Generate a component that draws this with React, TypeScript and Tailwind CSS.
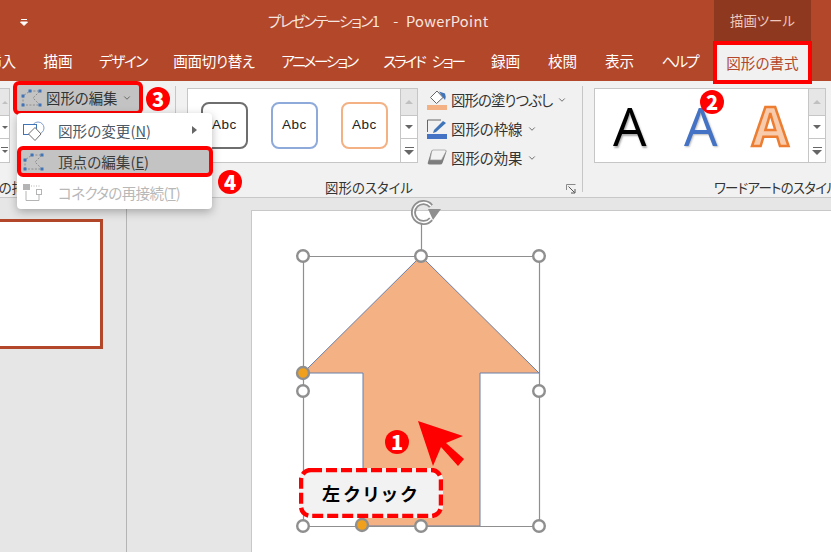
import type { ReactNode } from 'react';
import { ChevronDown } from 'lucide-react';

const tabs = [
  { label: '挿入', cls: 'w-[57px] -ml-[27px]' },
  { label: '描画', cls: 'w-[56px]' },
  { label: 'デザイン', cls: 'w-[74px] tracking-[-1.4px]' },
  { label: '画面切り替え', cls: 'w-[108px] tracking-[-0.4px]' },
  { label: 'アニメーション', cls: 'w-[102px] tracking-[-2.2px]' },
  { label: 'スライド ショー', cls: 'w-[107px] tracking-[-2.2px] [word-spacing:6px]' },
  { label: '録画', cls: 'w-[57px]' },
  { label: '校閲', cls: 'w-[57px]' },
  { label: '表示', cls: 'w-[57px]' },
  { label: 'ヘルプ', cls: 'w-[63px] tracking-[-2px]' },
];

function Badge({ n, cls }: { n: string; cls: string }) {
  return (
    <span className={`absolute flex h-[24px] w-[24px] items-center justify-center rounded-full bg-[#ff0000] text-[20px] font-black leading-none text-white ${cls}`}>
      {n}
    </span>
  );
}

function EditPointsIcon() {
  return (
    <svg width="21" height="18" viewBox="0 0 21 18" className="shrink-0">
      <path d="M2 16 L2 7 L9 2 L19 2 L12 9 L19 16 Z" fill="none" stroke="#8c8c8c" strokeWidth="1" strokeDasharray="2 1.5" />
      <rect x="0.5" y="5.5" width="3" height="3" fill="#3f74b8" />
      <rect x="0.5" y="14.5" width="3" height="3" fill="#3f74b8" />
      <rect x="7.5" y="0.5" width="3" height="3" fill="#3f74b8" />
      <rect x="17.5" y="0.5" width="3" height="3" fill="#3f74b8" />
      <rect x="17.5" y="14.5" width="3" height="3" fill="#3f74b8" />
    </svg>
  );
}

function ChangeShapeIcon() {
  return (
    <svg width="22" height="20" viewBox="0 0 22 20" className="shrink-0">
      <circle cx="15" cy="7" r="6" fill="none" stroke="#7f9fcb" strokeWidth="1" />
      <rect x="0.5" y="3.5" width="13" height="10" fill="#fff" stroke="#3f74b8" strokeWidth="1" />
      <path d="M12 6.5 L18 13 L12 19.5 L5.5 13 Z" fill="#fff" stroke="#6d6d6d" strokeWidth="1" />
    </svg>
  );
}

function ReconnectIcon() {
  return (
    <svg width="20" height="20" viewBox="0 0 20 20" className="shrink-0">
      <rect x="0" y="1" width="7" height="6" fill="#b4b4b4" />
      <path d="M8 3 H18" stroke="#b4b4b4" strokeDasharray="1 1.5" />
      <rect x="13.5" y="6.5" width="5" height="5" fill="#fff" stroke="#b4b4b4" />
      <path d="M3 8 V17.5 H16 V12" fill="none" stroke="#b4b4b4" />
    </svg>
  );
}

function FillIcon() {
  return (
    <svg width="20" height="20" viewBox="0 0 20 20">
      <path d="M10 1 L16 7.5 L9.5 13.5 L3.5 7.5 Z" fill="#fff" stroke="#666" strokeWidth="1" />
      <path d="M12 1.5 L18 3.5 Q19.5 7 18 10 L16 7.5 Z" fill="#3f74b8" />
      <rect x="0" y="15" width="20" height="5" fill="#f4b183" />
    </svg>
  );
}

function LineIcon() {
  return (
    <svg width="20" height="20" viewBox="0 0 20 20">
      <path d="M14 1 H0.5 V13" fill="none" stroke="#666" strokeWidth="1" />
      <path d="M7 11 L16 2 L19 4 L9 13 L6 14 Z" fill="#3f74b8" />
      <rect x="0" y="15" width="20" height="5" fill="#4472c4" />
    </svg>
  );
}

function EffectIcon() {
  return (
    <svg width="20" height="17" viewBox="0 0 20 17">
      <path d="M6 1 H18 Q20 1 19 4 L15.5 14 Q15 15.5 13 15.5 H2.5 Q0 15.5 1 13 L4 3 Q4.5 1 6 1 Z" fill="#7d7d7d" />
      <path d="M6 1 H18 Q20 1 18.5 3.5 L14.5 11 H3 L4.5 3 Q5 1 6 1 Z" fill="#f2f2f2" stroke="#9a9a9a" strokeWidth="0.7" />
    </svg>
  );
}

function Launcher() {
  return (
    <svg width="10" height="10" viewBox="0 0 10 10" className="absolute bottom-[3px] right-[6px]">
      <path d="M0.5 6 V0.5 H9.5" fill="none" stroke="#8a8a8a" />
      <path d="M2.5 2.5 L8.5 8.5 M5 9 H9 V5" fill="none" stroke="#555" />
    </svg>
  );
}

function GalleryScroll() {
  return (
    <div className="flex h-full w-[17px] shrink-0 flex-col border-l border-[#c6c6c6] text-[#666]">
      <div className="flex h-[26px] items-center justify-center bg-[#e6e6e6]">
        <span className="h-0 w-0 border-x-[4px] border-b-[4px] border-x-transparent border-b-[#c0c0c0]" />
      </div>
      <div className="flex h-[24px] items-center justify-center border-y border-[#c6c6c6] bg-white">
        <span className="h-0 w-0 border-x-[4px] border-t-[4px] border-x-transparent border-t-[#666]" />
      </div>
      <div className="flex flex-1 flex-col items-center justify-center gap-[2px] bg-white">
        <span className="h-px w-[9px] bg-[#666]" />
        <span className="h-0 w-0 border-x-[5px] border-t-[5px] border-x-transparent border-t-[#666]" />
      </div>
    </div>
  );
}

function AbcBox({ cls }: { cls: string }) {
  return (
    <div className={`flex h-[47px] w-[47px] shrink-0 items-center justify-center rounded-lg border-2 bg-white font-['Liberation_Sans',sans-serif] text-[13.5px] tracking-[0.5px] text-[#222] ${cls}`}>
      Abc
    </div>
  );
}

function Command({ icon, cls, children }: { icon: ReactNode; cls?: string; children: ReactNode }) {
  return (
    <div className="flex h-[29px] items-center gap-[4px]">
      <span className="flex w-[20px] justify-center">{icon}</span>
      <span className={`whitespace-nowrap text-[14.4px] text-[#333] ${cls ?? ''}`}>{children}</span>
      <ChevronDown size={10} className="ml-[1px] text-[#555]" />
    </div>
  );
}

function MenuRow({ icon, cls, children }: { icon: ReactNode; cls?: string; children: ReactNode }) {
  return (
    <div className={`flex items-center pl-[6px] text-[14.6px] ${cls ?? ''}`}>
      <span className="flex w-[22px] shrink-0">{icon}</span>
      <span className="ml-[13px] whitespace-nowrap">{children}</span>
    </div>
  );
}

function Handle({ x, y, orange }: { x: number; y: number; orange?: boolean }) {
  return <circle cx={x} cy={y} r={orange ? 6 : 5.8} fill={orange ? '#f0a01c' : '#fff'} stroke="#8f8f8f" strokeWidth={2.4} />;
}

export default function App() {
  return (
    <div className="relative flex h-[552px] w-[831px] flex-col overflow-hidden bg-[#e6e6e6] font-['Noto_Sans_CJK_JP',sans-serif] [font-feature-settings:'palt']">
      {/* Title bar */}
      <div className="flex h-[41px] shrink-0 items-center bg-[#b3472a] text-[14.6px] text-[#f6e6e0]">
        <svg width="8" height="7" viewBox="0 0 8 7" className="ml-[20px] mt-[3px]">
          <path d="M1 0.5 H7 M0.5 3 H7.5 L4 6.5 Z" stroke="#fff" fill="#fff" strokeWidth="1" />
        </svg>
        <span className="ml-[240px] w-[118px] whitespace-nowrap tracking-[-1.6px]">プレゼンテーション1</span>
        <span className="whitespace-pre tracking-[0.35px]">{'  -  PowerPoint'}</span>
        <div className="ml-auto mr-[20px] flex h-full w-[97px] items-center justify-center bg-[#8e3820] text-[13.4px] text-[#efc9bb]">描画ツール</div>
      </div>

      {/* Tabs */}
      <div className="flex h-[40px] shrink-0 items-center bg-[#b3472a] text-[14.6px] text-white">
        {tabs.map((t) => (
          <div key={t.label} className={`shrink-0 whitespace-pre text-center ${t.cls}`}>{t.label}</div>
        ))}
      </div>

      {/* Ribbon */}
      <div className="flex h-[117px] shrink-0 border-b border-[#c8c8c8] bg-[#f1f1f1] text-[#333]">
        <div className="relative w-[175px] shrink-0 overflow-hidden">
          <div className="mt-[7px] h-[75px] w-[10px] border-y border-r border-[#c6c6c6] bg-white">
            <div className="flex h-[26px] items-center justify-center bg-[#e6e6e6]">
              <span className="h-0 w-0 border-x-[3px] border-b-[3px] border-x-transparent border-b-[#c0c0c0]" />
            </div>
            <div className="flex h-[24px] items-center justify-center border-y border-[#c6c6c6]">
              <span className="h-0 w-0 border-x-[3px] border-t-[3px] border-x-transparent border-t-[#666]" />
            </div>
            <div className="flex h-[22px] flex-col items-center justify-center gap-[2px]">
              <span className="h-px w-[7px] bg-[#666]" />
              <span className="h-0 w-0 border-x-[3px] border-t-[3px] border-x-transparent border-t-[#666]" />
            </div>
          </div>
          <div className="-ml-[28px] mt-[14px] whitespace-nowrap text-[13.4px]">図形の挿入</div>
        </div>
        <div className="my-[5px] w-px shrink-0 bg-[#c6c6c6]" />

        <div className="relative w-[406px] shrink-0">
          <div className="ml-[11px] mt-[7px] flex h-[75px]">
            <div className="flex h-[75px] w-[231px] items-center border border-[#c6c6c6] bg-white">
              <div className="flex flex-1 items-center gap-[23px] pl-[13px]">
                <AbcBox cls="border-[#6e6e6e]" />
                <AbcBox cls="border-[#8eaadb]" />
                <AbcBox cls="border-[#f4b183]" />
              </div>
              <GalleryScroll />
            </div>
            <div className="-mt-[3px] ml-[9px]">
              <Command icon={<FillIcon />} cls="tracking-[-0.9px]">図形の塗りつぶし</Command>
              <Command icon={<LineIcon />}>図形の枠線</Command>
              <Command icon={<EffectIcon />}>図形の効果</Command>
            </div>
          </div>
          <div className="mt-[14px] pr-[20px] text-center text-[13.4px]">図形のスタイル</div>
          <Launcher />
        </div>
        <div className="my-[5px] w-px shrink-0 bg-[#c6c6c6]" />

        <div className="relative flex-1 overflow-hidden">
          <div className="ml-[11px] mt-[7px] flex h-[75px] w-[232px] items-center border border-[#c6c6c6] bg-white font-['Open_Sans',sans-serif] text-[53px] leading-none">
            <div className="flex flex-1 items-center pl-[18px]">
              <span className="w-[71px] shrink-0 text-black [text-shadow:1px_2px_2px_#aaa]">A</span>
              <span className="w-[68px] shrink-0 text-[#4472c4] [text-shadow:1px_1px_2px_#bbb]">A</span>
              <span className="font-bold text-[#f8cbad] [-webkit-text-stroke:2.5px_#ed7d31]">A</span>
            </div>
            <GalleryScroll />
          </div>
          <div className="ml-[131px] mt-[14px] whitespace-nowrap text-[13.4px] tracking-[-0.7px]">ワードアートのスタイル</div>
        </div>
      </div>

      {/* Workspace */}
      <div className="flex min-h-0 flex-1">
        <div className="w-[127px] shrink-0 border-r border-[#b4b4b4] pt-[21px]">
          <div className="h-[130px] w-[103px] border-y-[3px] border-r-[3px] border-[#b3472a] bg-white" />
        </div>
        <div className="ml-[124px] mt-[12px] flex-1 border-l border-t border-[#c8c8c8] bg-white">
          <svg viewBox="252 211 579 341" className="h-[341px] w-[579px] overflow-visible">
            <path d="M303 373 L421 256 L539 373 H480 V526 H363 V373 Z" fill="#f4b183" stroke="#6b7fa8" strokeWidth="1" />
            <path d="M303.5 256.5 H539.5 V526.5 H303.5 Z M421.5 256 V224" fill="none" stroke="#8f8f8f" strokeWidth="1.2" />
            <path d="M431 206 A10 10 0 1 0 431 219" fill="none" stroke="#8f8f8f" strokeWidth="5" />
            <path d="M431 206 A10 10 0 1 0 431 219" fill="none" stroke="#fff" strokeWidth="1.3" />
            <path d="M428 209 H441 L433 220 Z" fill="#8f8f8f" />
            <Handle x={303} y={256} />
            <Handle x={421} y={256} />
            <Handle x={539} y={256} />
            <Handle x={303} y={391} />
            <Handle x={539} y={391} />
            <Handle x={303} y={526} />
            <Handle x={421} y={526} />
            <Handle x={539} y={526} />
            <Handle x={303} y={373} orange />
            <Handle x={362} y={525} orange />
            <path d="M418 421 L463 436 L446 443 L464 459 L458 466 L441 447 L433 466 Z" fill="#ff0000" />
          </svg>
        </div>
      </div>

      {/* Ribbon overlays and annotations */}
      <div className="absolute left-[713px] top-[41px] flex h-[43px] w-[99px] items-center justify-center border-[4px] border-[#ff0000] bg-[#f1f1f1] text-[14.6px] text-[#b3472a]">
        図形の書式
      </div>

      <div className="absolute left-[13px] top-[81px] flex h-[34px] w-[130px] items-center rounded-[6px] border-[4px] border-[#ff0000] bg-[#c3c3c3] pl-[4px] text-[14.4px] text-[#333]">
        <EditPointsIcon />
        <span className="ml-[4px]">図形の編集</span>
        <ChevronDown size={10} className="ml-[5px] text-[#555]" />
      </div>

      <div className="absolute left-[17px] top-[113px] h-[96px] w-[195px] rounded-[4px] bg-white text-[#555] shadow-[0_3px_10px_rgba(0,0,0,0.28)]">
        <MenuRow icon={<ChangeShapeIcon />} cls="mt-[4px] h-[28px] text-[#4d5a66]">
          図形の変更(<span className="underline">N</span>)
          <span className="absolute right-[15px] top-[13px] h-0 w-0 border-y-[4px] border-l-[5px] border-y-transparent border-l-[#666]" />
        </MenuRow>
        <MenuRow icon={<ReconnectIcon />} cls="mt-[35px] h-[26px] tracking-[-0.7px] text-[#b8b8b8]">
          コネクタの再接続(<span className="underline">T</span>)
        </MenuRow>
      </div>

      <div className="absolute left-[17px] top-[146px] flex h-[31px] w-[196px] items-center rounded-[6px] border-[4px] border-[#ff0000] bg-[#c3c3c3] pl-[2px] text-[14.6px] text-[#3c3c3c]">
        <EditPointsIcon />
        <span className="ml-[14px]">頂点の編集(<span className="underline">E</span>)</span>
      </div>

      <div className="absolute left-[299px] top-[468px] flex h-[50px] w-[144px] items-center justify-center rounded-[12px] bg-[#f2f2f2] text-[18px] font-bold tracking-[3.4px] text-black">
        <svg width="144" height="50" viewBox="0 0 144 50" className="absolute inset-0">
          <rect x="2" y="2" width="140" height="46" rx="10" fill="none" stroke="#ff0000" strokeWidth="4.5" strokeDasharray="11 4" />
        </svg>
        <span className="relative">左クリック</span>
      </div>

      <Badge n="1" cls="left-[385px] top-[430px]" />
      <Badge n="2" cls="left-[700px] top-[90px]" />
      <Badge n="3" cls="left-[146px] top-[87px]" />
      <Badge n="4" cls="left-[218px] top-[170px]" />
    </div>
  );
}
